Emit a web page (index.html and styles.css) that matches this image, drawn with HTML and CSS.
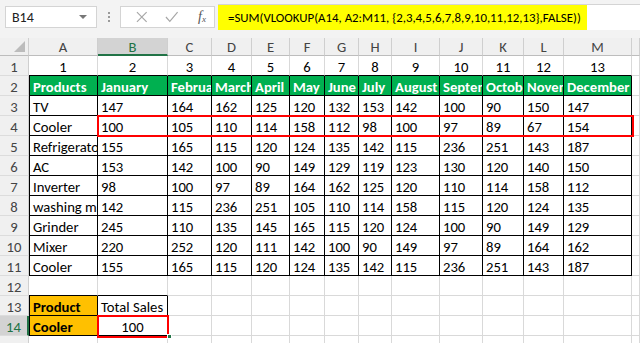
FILE: index.html
```html
<!DOCTYPE html>
<html lang="en">

<head>
    <meta charset="UTF-8">
    <title>VLOOKUP SUM</title>
    <link rel="stylesheet" href="styles.css">
</head>

<body>
    <!-- formula bar -->
    <div class="formula-bar">
        <div class="name-box">
            <span>B14</span>
            <span class="drop"></span>
        </div>
        <div class="grip">
            <i></i><i></i><i></i>
        </div>
        <div class="fx-box">
            <svg width="14" height="14" viewBox="0 0 14 14"><path d="M2 2 L12 12 M12 2 L2 12" stroke="#a6a6a6" stroke-width="1.2" fill="none"/></svg>
            <svg width="16" height="14" viewBox="0 0 16 14"><path d="M2 7 L6 11.5 L14 2" stroke="#a6a6a6" stroke-width="1.2" fill="none"/></svg>
            <span class="fx">f<sub>x</sub></span>
        </div>
        <div class="formula-input">
            <span class="formula">=SUM(VLOOKUP(A14, A2:M11, {2,3,4,5,6,7,8,9,10,11,12,13},FALSE))</span>
        </div>
    </div>

    <!-- sheet -->
    <div class="sheet">
        <div class="row head">
            <div class="c corner"><span class="tri"></span></div>
            <div class="c">A</div>
            <div class="c sel">B</div>
            <div class="c">C</div>
            <div class="c">D</div>
            <div class="c">E</div>
            <div class="c">F</div>
            <div class="c">G</div>
            <div class="c">H</div>
            <div class="c">I</div>
            <div class="c">J</div>
            <div class="c">K</div>
            <div class="c">L</div>
            <div class="c">M</div>
            <div class="c"></div>
        </div>
        <div class="row">
            <div class="c rh">1</div>
            <div class="c ctr top">1</div>
            <div class="c ctr top">2</div>
            <div class="c ctr top">3</div>
            <div class="c ctr top">4</div>
            <div class="c ctr top">5</div>
            <div class="c ctr top">6</div>
            <div class="c ctr top">7</div>
            <div class="c ctr top">8</div>
            <div class="c ctr top">9</div>
            <div class="c ctr top">10</div>
            <div class="c ctr top">11</div>
            <div class="c ctr top">12</div>
            <div class="c ctr top">13</div>
            <div class="c"></div>
        </div>
        <div class="row">
            <div class="c rh">2</div>
            <div class="c t tl g">Products</div>
            <div class="c t g">January</div>
            <div class="c t g">February</div>
            <div class="c t g">March</div>
            <div class="c t g">April</div>
            <div class="c t g">May</div>
            <div class="c t g">June</div>
            <div class="c t g">July</div>
            <div class="c t g">August</div>
            <div class="c t g">September</div>
            <div class="c t g">October</div>
            <div class="c t g">November</div>
            <div class="c t g">December</div>
            <div class="c"></div>
        </div>
        <div class="row">
            <div class="c rh">3</div>
            <div class="c t tl">TV</div>
            <div class="c t">147</div>
            <div class="c t">164</div>
            <div class="c t">162</div>
            <div class="c t">125</div>
            <div class="c t">120</div>
            <div class="c t">132</div>
            <div class="c t">153</div>
            <div class="c t">142</div>
            <div class="c t">100</div>
            <div class="c t">90</div>
            <div class="c t">150</div>
            <div class="c t">147</div>
            <div class="c"></div>
        </div>
        <div class="row">
            <div class="c rh">4</div>
            <div class="c t tl">Cooler</div>
            <div class="c t">100</div>
            <div class="c t">105</div>
            <div class="c t">110</div>
            <div class="c t">114</div>
            <div class="c t">158</div>
            <div class="c t">112</div>
            <div class="c t">98</div>
            <div class="c t">100</div>
            <div class="c t">97</div>
            <div class="c t">89</div>
            <div class="c t">67</div>
            <div class="c t">154</div>
            <div class="c"></div>
        </div>
        <div class="row">
            <div class="c rh">5</div>
            <div class="c t tl">Refrigerator</div>
            <div class="c t">155</div>
            <div class="c t">165</div>
            <div class="c t">115</div>
            <div class="c t">120</div>
            <div class="c t">124</div>
            <div class="c t">135</div>
            <div class="c t">142</div>
            <div class="c t">115</div>
            <div class="c t">236</div>
            <div class="c t">251</div>
            <div class="c t">143</div>
            <div class="c t">187</div>
            <div class="c"></div>
        </div>
        <div class="row">
            <div class="c rh">6</div>
            <div class="c t tl">AC</div>
            <div class="c t">153</div>
            <div class="c t">142</div>
            <div class="c t">100</div>
            <div class="c t">90</div>
            <div class="c t">149</div>
            <div class="c t">129</div>
            <div class="c t">119</div>
            <div class="c t">123</div>
            <div class="c t">130</div>
            <div class="c t">120</div>
            <div class="c t">140</div>
            <div class="c t">150</div>
            <div class="c"></div>
        </div>
        <div class="row">
            <div class="c rh">7</div>
            <div class="c t tl">Inverter</div>
            <div class="c t">98</div>
            <div class="c t">100</div>
            <div class="c t">97</div>
            <div class="c t">89</div>
            <div class="c t">164</div>
            <div class="c t">162</div>
            <div class="c t">125</div>
            <div class="c t">120</div>
            <div class="c t">110</div>
            <div class="c t">114</div>
            <div class="c t">158</div>
            <div class="c t">112</div>
            <div class="c"></div>
        </div>
        <div class="row">
            <div class="c rh">8</div>
            <div class="c t tl">washing machine</div>
            <div class="c t">142</div>
            <div class="c t">115</div>
            <div class="c t">236</div>
            <div class="c t">251</div>
            <div class="c t">105</div>
            <div class="c t">110</div>
            <div class="c t">114</div>
            <div class="c t">158</div>
            <div class="c t">115</div>
            <div class="c t">120</div>
            <div class="c t">124</div>
            <div class="c t">135</div>
            <div class="c"></div>
        </div>
        <div class="row">
            <div class="c rh">9</div>
            <div class="c t tl">Grinder</div>
            <div class="c t">245</div>
            <div class="c t">110</div>
            <div class="c t">135</div>
            <div class="c t">145</div>
            <div class="c t">165</div>
            <div class="c t">115</div>
            <div class="c t">120</div>
            <div class="c t">124</div>
            <div class="c t">100</div>
            <div class="c t">90</div>
            <div class="c t">149</div>
            <div class="c t">129</div>
            <div class="c"></div>
        </div>
        <div class="row">
            <div class="c rh">10</div>
            <div class="c t tl">Mixer</div>
            <div class="c t">220</div>
            <div class="c t">252</div>
            <div class="c t">120</div>
            <div class="c t">111</div>
            <div class="c t">142</div>
            <div class="c t">100</div>
            <div class="c t">90</div>
            <div class="c t">149</div>
            <div class="c t">97</div>
            <div class="c t">89</div>
            <div class="c t">164</div>
            <div class="c t">162</div>
            <div class="c"></div>
        </div>
        <div class="row">
            <div class="c rh">11</div>
            <div class="c t tl">Cooler</div>
            <div class="c t">155</div>
            <div class="c t">165</div>
            <div class="c t">115</div>
            <div class="c t">120</div>
            <div class="c t">124</div>
            <div class="c t">135</div>
            <div class="c t">142</div>
            <div class="c t">115</div>
            <div class="c t">236</div>
            <div class="c t">251</div>
            <div class="c t">143</div>
            <div class="c t">187</div>
            <div class="c"></div>
        </div>
        <div class="row">
            <div class="c rh">12</div>
            <div class="c top"></div>
            <div class="c top"></div>
            <div class="c"></div>
            <div class="c"></div>
            <div class="c"></div>
            <div class="c"></div>
            <div class="c"></div>
            <div class="c"></div>
            <div class="c"></div>
            <div class="c"></div>
            <div class="c"></div>
            <div class="c"></div>
            <div class="c"></div>
            <div class="c"></div>
        </div>
        <div class="row">
            <div class="c rh">13</div>
            <div class="c t tl o">Product</div>
            <div class="c t">Total Sales</div>
            <div class="c"></div>
            <div class="c"></div>
            <div class="c"></div>
            <div class="c"></div>
            <div class="c"></div>
            <div class="c"></div>
            <div class="c"></div>
            <div class="c"></div>
            <div class="c"></div>
            <div class="c"></div>
            <div class="c"></div>
            <div class="c"></div>
        </div>
        <div class="row">
            <div class="c rh sel">14</div>
            <div class="c t tl o">Cooler</div>
            <div class="c t ctr">100</div>
            <div class="c"></div>
            <div class="c"></div>
            <div class="c"></div>
            <div class="c"></div>
            <div class="c"></div>
            <div class="c"></div>
            <div class="c"></div>
            <div class="c"></div>
            <div class="c"></div>
            <div class="c"></div>
            <div class="c"></div>
            <div class="c"></div>
        </div>
        <div class="row">
            <div class="c rh">15</div>
            <div class="c"></div>
            <div class="c"></div>
            <div class="c"></div>
            <div class="c"></div>
            <div class="c"></div>
            <div class="c"></div>
            <div class="c"></div>
            <div class="c"></div>
            <div class="c"></div>
            <div class="c"></div>
            <div class="c"></div>
            <div class="c"></div>
            <div class="c"></div>
            <div class="c"></div>
        </div>

        <!-- highlight boxes -->
        <div class="mark mark-row"></div>
        <div class="mark mark-cell"></div>
        <div class="handle"></div>
    </div>
</body>

</html>
```

FILE: styles.css
```css
* {
    margin: 0;
    padding: 0;
    box-sizing: border-box;
}

body {
    width: 640px;
    height: 343px;
    overflow: hidden;
    background-color: #fff;
    font-family: Carlito, Calibri, Lato, "Liberation Sans", sans-serif;
    font-size: 14.67px;
    color: #000;
}

/* 公式栏 */
.formula-bar {
    display: flex;
    align-items: center;
    height: 38px;
    padding: 4px 0 8px 5px;
    background-color: #f3f3f3;
}

.name-box {
    display: flex;
    align-items: center;
    justify-content: space-between;
    width: 92px;
    height: 22px;
    padding: 0 9px 0 6px;
    background-color: #fff;
    border: 1px solid #d4d4d4;
    font-size: 14px;
    color: #222;
}

.drop {
    width: 0;
    height: 0;
    border-left: 4px solid transparent;
    border-right: 4px solid transparent;
    border-top: 4px solid #777;
}

.grip {
    display: flex;
    flex-direction: column;
    align-items: center;
    gap: 2px;
    width: 23px;
}

.grip i {
    width: 2px;
    height: 2px;
    background-color: #9a9a9a;
}

.fx-box {
    display: flex;
    align-items: center;
    width: 95px;
    height: 22px;
    padding: 0 8px 0 14px;
    gap: 15px;
    background-color: #fff;
    border: 1px solid #d4d4d4;
}

.fx {
    margin-left: 4px;
    font-family: "Liberation Serif", serif;
    font-style: italic;
    font-size: 14px;
    color: #555;
}

.fx sub {
    font-size: 9px;
    vertical-align: -1px;
}

.formula-input {
    flex: 1;
    display: flex;
    height: 26px;
    margin-left: 3px;
    background-color: #fff;
    border-top: 1px solid #d4d4d4;
}

.formula {
    display: flex;
    align-items: center;
    width: 369px;
    padding-left: 10px;
    white-space: nowrap;
    overflow: hidden;
    background-color: #ffff00;
    font-size: 12.85px;
    color: #000;
}

/* 表格 */
.sheet {
    position: relative;
}

.row {
    display: grid;
    grid-template-columns: 29px 69px 70px 44px 40px 38px 35px 34px 33px 48px 43px 41px 40px 68px 8px;
    height: 20px;
}

.c {
    overflow: hidden;
    white-space: nowrap;
    padding: 1px 3px 0;
    line-height: 20px;
    border-right: 1px solid #d9d9d9;
    border-bottom: 1px solid #d9d9d9;
}

.head {
    height: 18px;
    background-color: #f0f0f0;
}

.head .c {
    padding-top: 0;
    line-height: 18px;
    text-align: center;
    color: #444;
    border-right-color: #cfcfcf;
    border-bottom-color: #bdbdbd;
}

.corner {
    position: relative;
}

.tri {
    position: absolute;
    right: 3px;
    bottom: 3px;
    width: 0;
    height: 0;
    border-left: 11px solid transparent;
    border-bottom: 11px solid #bcbcbc;
}

.rh {
    text-align: center;
    color: #444;
    background-color: #f0f0f0;
    border-right-color: #cfcfcf;
    border-bottom-color: #dcdcdc;
}

.head .sel,
.rh.sel {
    background-color: #d3d3d3;
    color: #217346;
}

.head .sel {
    border-bottom: 2px solid #217346;
}

.rh.sel {
    border-right: 2px solid #217346;
}

.ctr {
    text-align: center;
}

.top {
    border-bottom-color: #000;
}

.t {
    border-right-color: #000;
    border-bottom-color: #000;
}

.tl {
    border-left: 1px solid #000;
}

.g {
    background-color: #00b050;
    color: #fff;
    font-weight: bold;
}

.o {
    background-color: #ffc000;
    font-weight: bold;
}

/* 红框 */
.mark {
    position: absolute;
    border: 2px solid #ff0000;
}

.mark-row {
    left: 97px;
    top: 77px;
    width: 537px;
    height: 22px;
}

.mark-cell {
    left: 97px;
    top: 277px;
    width: 72px;
    height: 23px;
}

.handle {
    position: absolute;
    left: 167px;
    top: 296px;
    width: 5px;
    height: 5px;
    background-color: #217346;
    border: 1px solid #fff;
}
```
